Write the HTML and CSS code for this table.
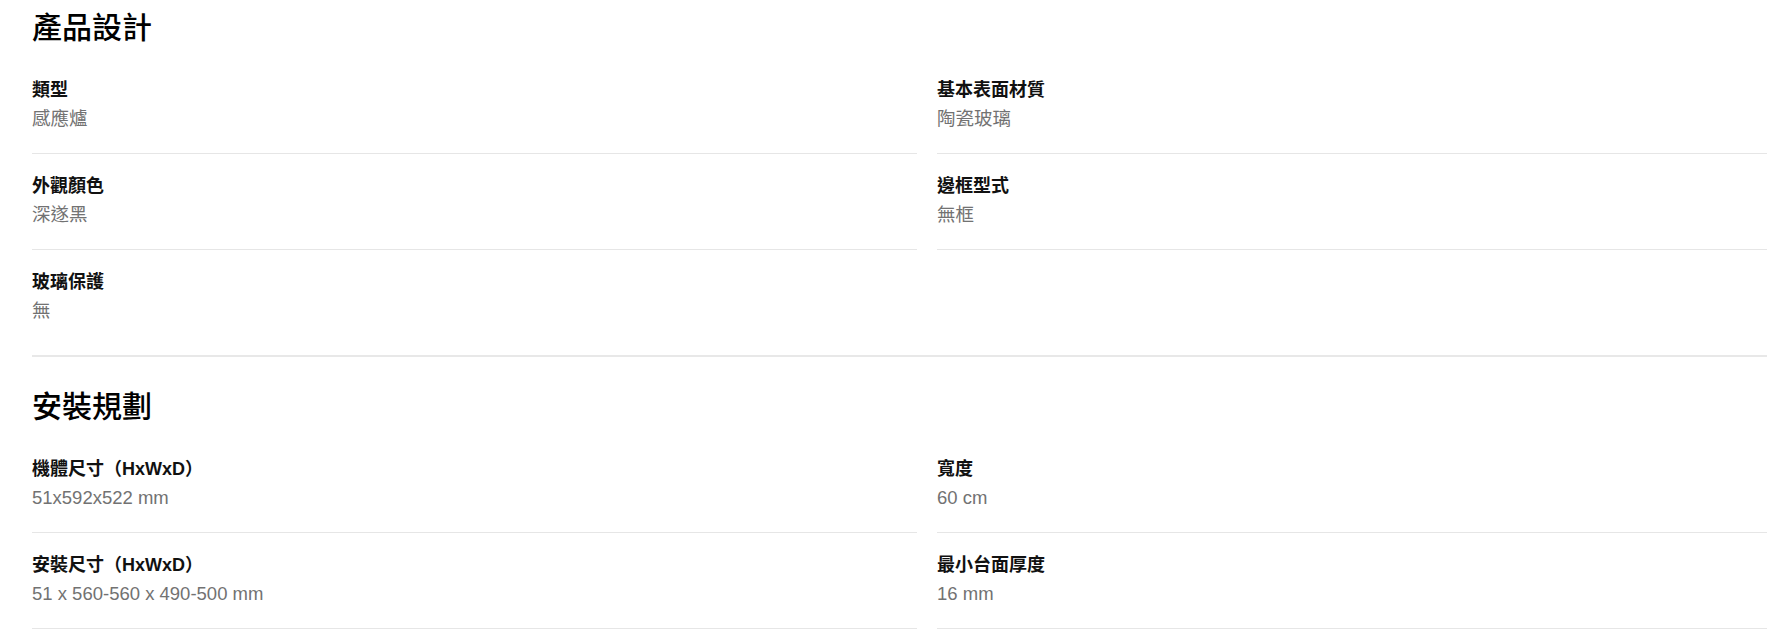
FILE: index.html
```html
<!DOCTYPE html>
<html lang="zh-Hant">
<head>
    <meta charset="UTF-8" />
    <title>規格 | 感應爐</title>
    <link rel="stylesheet" href="styles.css">
</head>
<body>
    <div class="page">
        <!-- 產品設計 -->
        <section class="spec-section">
            <h2 class="spec-title">產品設計</h2>
            <div class="spec-grid">
                <div class="spec">
                    <p class="spec-label">類型</p>
                    <p class="spec-value">感應爐</p>
                </div>
                <div class="spec">
                    <p class="spec-label">基本表面材質</p>
                    <p class="spec-value">陶瓷玻璃</p>
                </div>
                <div class="spec">
                    <p class="spec-label">外觀顏色</p>
                    <p class="spec-value">深遂黑</p>
                </div>
                <div class="spec">
                    <p class="spec-label">邊框型式</p>
                    <p class="spec-value">無框</p>
                </div>
                <div class="spec">
                    <p class="spec-label">玻璃保護</p>
                    <p class="spec-value">無</p>
                </div>
            </div>
        </section>
        <!-- 安裝規劃 -->
        <section class="spec-section">
            <h2 class="spec-title">安裝規劃</h2>
            <div class="spec-grid">
                <div class="spec">
                    <p class="spec-label">機體尺寸（HxWxD）</p>
                    <p class="spec-value">51x592x522 mm</p>
                </div>
                <div class="spec">
                    <p class="spec-label">寬度</p>
                    <p class="spec-value">60 cm</p>
                </div>
                <div class="spec">
                    <p class="spec-label">安裝尺寸（HxWxD）</p>
                    <p class="spec-value">51 x 560-560 x 490-500 mm</p>
                </div>
                <div class="spec">
                    <p class="spec-label">最小台面厚度</p>
                    <p class="spec-value">16 mm</p>
                </div>
            </div>
        </section>
    </div>
</body>
</html>
```

FILE: styles.css
```css
*,
*:before,
*:after{
    padding: 0;
    margin: 0;
    box-sizing: border-box;
}
body{
    background-color: #ffffff;
    color: #000000;
    font-family: "Liberation Sans", "Noto Sans CJK TC", sans-serif;
}
.page{
    padding: 8px 0 0 32px;
    overflow: hidden;
}
.spec-section{
    width: 1790px;
    padding-bottom: 10px;
    border-bottom: 2px solid #e8e8e8;
}
.spec-section + .spec-section{
    padding-top: 30px;
}
.spec-title{
    font-size: 30px;
    line-height: 40px;
    font-weight: 500;
    margin-bottom: 10px;
}
.spec-grid{
    display: grid;
    grid-template-columns: 885px 885px;
    column-gap: 20px;
}
.spec{
    display: flex;
    flex-direction: column;
    gap: 3px;
    padding: 20px 0;
    border-bottom: 1px solid #e6e6e6;
}
/* a lone item on the last row has no line under it */
.spec:last-child:nth-child(odd){
    border-bottom: none;
}
.spec-label{
    font-size: 18px;
    line-height: 24px;
    font-weight: 700;
    color: #111111;
}
.spec-value{
    font-size: 18.5px;
    line-height: 28px;
    font-weight: 400;
    color: #727272;
}
```
